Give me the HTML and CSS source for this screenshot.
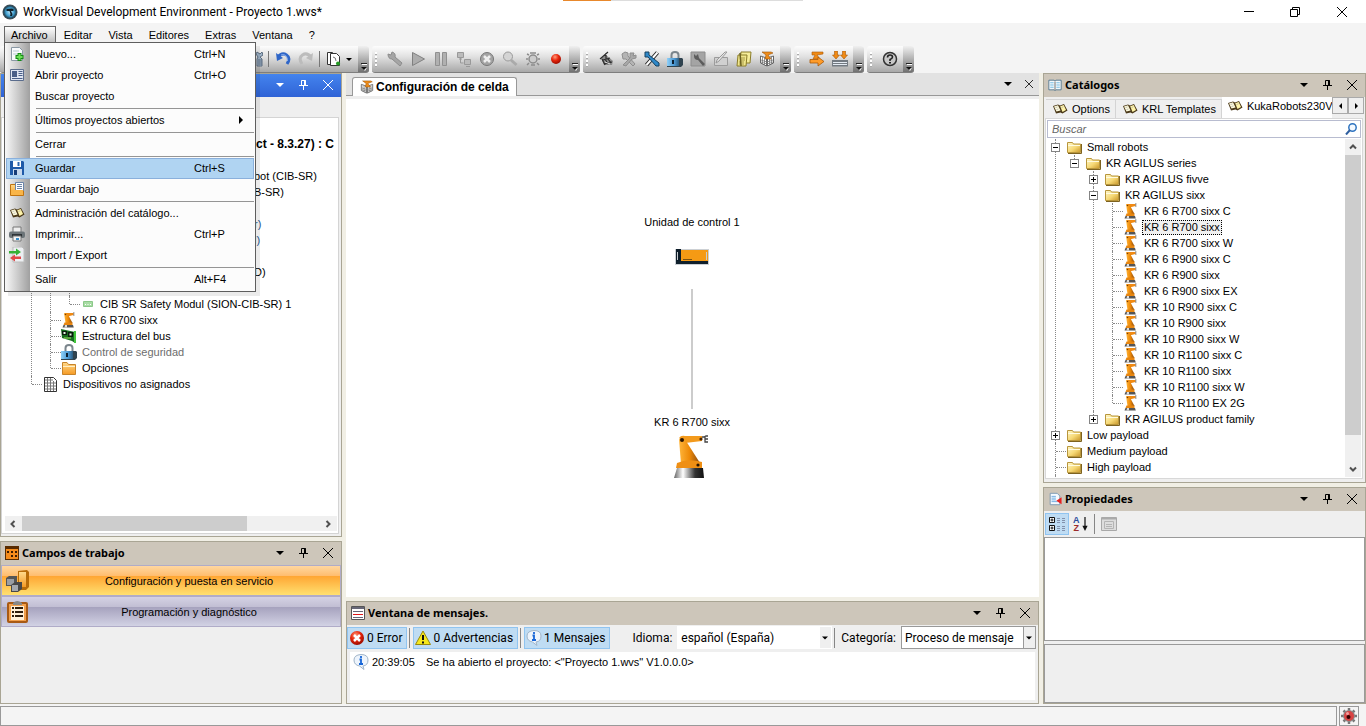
FILE: index.html
```html
<!DOCTYPE html>
<html lang="es">
<head>
<meta charset="utf-8">
<title>WorkVisual Development Environment - Proyecto 1.wvs*</title>
<link rel="stylesheet" href="styles.css">
</head>
<body>
<svg class="defs" aria-hidden="true">
  <defs>
    <linearGradient id="gGold" x1="0" y1="0" x2="1" y2="1"><stop offset="0" stop-color="#fff8cc"/><stop offset=".55" stop-color="#f6d874"/><stop offset="1" stop-color="#c8962a"/></linearGradient>
    <linearGradient id="gOrange" x1="0" y1="0" x2="0" y2="1"><stop offset="0" stop-color="#ffd98a"/><stop offset="1" stop-color="#f59a24"/></linearGradient>
    <linearGradient id="gArm" x1="0" y1="0" x2="1" y2="0"><stop offset="0" stop-color="#ffb53a"/><stop offset=".5" stop-color="#ee8a08"/><stop offset="1" stop-color="#8a4a10"/></linearGradient>
    <linearGradient id="gBase" x1="0" y1="0" x2="1" y2="0"><stop offset="0" stop-color="#666"/><stop offset=".3" stop-color="#fff"/><stop offset=".7" stop-color="#333"/><stop offset="1" stop-color="#111"/></linearGradient>
    <linearGradient id="gLock" x1="0" y1="0" x2="1" y2="0"><stop offset="0" stop-color="#8fd0f8"/><stop offset=".6" stop-color="#4a98d4"/><stop offset="1" stop-color="#2c5c80"/></linearGradient>
    <radialGradient id="gRed" cx=".4" cy=".3" r=".7"><stop offset="0" stop-color="#ff9a7a"/><stop offset=".5" stop-color="#e8260c"/><stop offset="1" stop-color="#9c0c00"/></radialGradient>
    <radialGradient id="gApp" cx=".5" cy=".5" r=".5"><stop offset="0" stop-color="#bfe6fa"/><stop offset=".65" stop-color="#3f9fd0"/><stop offset="1" stop-color="#1c3f52"/></radialGradient>
  </defs>
  <symbol id="app" viewBox="0 0 16 16"><circle cx="8" cy="8" r="7.500" fill="#3c4d57"/><circle cx="8" cy="8" r="6.300" fill="url(#gApp)"/><path d="M4.500 5l5-.5 2 .5v2H9l1.500 3-.5 2H8l.5-2-1-3-3 0z" fill="#10222c"/></symbol>
  <symbol id="folder" viewBox="0 0 16 16"><path d="M1.500 3.500h5l1 1.500h7v8.500h-13z" fill="url(#gGold)" stroke="#b8963c"/><path d="M2 6.500h12" stroke="#fffbe0"/><path d="M15.500 5v9.500H2" stroke="#7d6220" fill="none"/></symbol>
  <symbol id="ofolder" viewBox="0 0 16 16"><path d="M1.500 14.500V2.500H6l1.500 2h7v10z" fill="url(#gOrange)" stroke="#c8842a"/><path d="M2 6.500h12" stroke="#fff0c8"/></symbol>
  <symbol id="robot" viewBox="0 0 16 16"><path d="M3 1h9.500v2L6.500 4.500z" fill="#f08a14"/><path d="M3 1l4 1.500 4.500 8.500H4.500z" fill="url(#gArm)"/><path d="M12 1h1.500M12 3h1.500" stroke="#444" stroke-width=".8"/><path d="M3.500 10.500h8V13h-9z" fill="#e88610"/><path d="M2.500 13H12l.8 2.500H1.500z" fill="#555"/><path d="M4 13h2v2.500H3.500z" fill="#ddd"/><circle cx="4.500" cy="2.500" r=".8" fill="#7a3c00"/></symbol>
  <symbol id="bigrobot" viewBox="0 0 36 46"><path d="M5 4Q7 1 11 2l17 0v5L11 9z" fill="#f39a1c"/><path d="M5 5l7 2 14 22-19 1z" fill="url(#gArm)"/><path d="M3 29q11-5 25-1v6H2z" fill="#ef8f14"/><path d="M3 34h26l1 10H0z" fill="url(#gBase)"/><path d="M28 3h2l2-1h2M31 3v5h3M31 5h3" stroke="#444" stroke-width="1.300" fill="none"/><circle cx="8" cy="6" r="2" fill="#2a1400"/><circle cx="27" cy="5" r="1.600" fill="#4a2400"/><circle cx="24" cy="31" r="1.600" fill="#2a1400"/></symbol>
  <symbol id="book" viewBox="0 0 16 16"><path d="M1 5l5-1.500 2 1 4-1.500 3.500 6.500-5 3-2-1-4.500 1z" fill="#4a3818"/><path d="M2 5.500l4-1.200 2.500 5.200-4 1z" fill="#fffbdc"/><path d="M8.200 5.200l3.500-1.200 2.300 5-3.500 2z" fill="#fff4a8"/><path d="M3.500 6.500l2-.5M4.500 8.500l2-.5M9.500 6.500l2-.7" stroke="#aaa" stroke-width=".7"/></symbol>
  <symbol id="bluebook" viewBox="0 0 16 16"><path d="M1 2.500h6l1 1 1-1h6v11H9l-1 1-1-1H1z" fill="#fff" stroke="#48708c"/><path d="M2.500 5h4M2.500 7h4M2.500 9h4M2.500 11h4M9.500 5h4M9.500 7h4M9.500 9h4M9.500 11h4" stroke="#78bde2"/><path d="M8 4v10" stroke="#555"/></symbol>
  <symbol id="newdoc" viewBox="0 0 16 16"><path d="M2.500 1.500h8l3 3v10h-11z" fill="#f8fafc" stroke="#8a98a4"/><path d="M4 5h6M4 8h4" stroke="#b8c8d4"/><path d="M10.500 7v8M6.500 11h8" stroke="#158a15" stroke-width="4"/><path d="M10.500 8v6M7.500 11h6" stroke="#6ee05a" stroke-width="2"/></symbol>
  <symbol id="open" viewBox="0 0 16 16"><path d="M1.500 2.500h13v11h-13z" fill="#dfe6f2" stroke="#5a6c8c"/><path d="M3 4h5v6H3z" fill="#4a5f88"/><path d="M9.500 4.500h4M9.500 6.500h4M9.500 8.500h4M3 11.500h10.500" stroke="#4a5f88"/></symbol>
  <symbol id="save" viewBox="0 0 16 16"><path d="M1 1h13l1 1v13H1z" fill="#1f5aa8"/><path d="M4 1h8v6H4z" fill="#fff"/><path d="M8.500 2h2v4h-2z" fill="#2c66b0"/><path d="M4 9h9v6H4z" fill="#c8d8ec"/><path d="M5 10h3v5H5z" fill="#173c78"/></symbol>
  <symbol id="saveas" viewBox="0 0 16 16"><path d="M1.500 3.500h5l1 2h7v9h-13z" fill="url(#gOrange)" stroke="#c07410"/><path d="M6.500 1.500h8v8h-8z" fill="#fff" stroke="#6b84a8"/><path d="M8 3.500h5M8 5.500h5M8 7.500h5" stroke="#6b84a8"/><path d="M2 9h12v5H2z" fill="#f9b548"/></symbol>
  <symbol id="print" viewBox="0 0 16 16"><path d="M4 1h8v6H4z" fill="#eee" stroke="#777"/><rect y="5.500" width="16" height="6.500" rx="2" fill="#6c7478"/><path d="M3 8h10v3H3z" fill="#2e3438"/><path d="M4 10h8v5H4z" fill="#f4f4f4" stroke="#777"/><path d="M7 12h3v2H7z" fill="#3c8ec8"/></symbol>
  <symbol id="bin" viewBox="0 0 16 16"><path d="M10 1l3 2 2-2 1 3-3 2 2 2v7h-5V8l1-2-2-3z" fill="#9fb4c8" stroke="#5c6c80"/><path d="M12 8v6M14 8v6" stroke="#5c6c80"/></symbol>
  <symbol id="impexp" viewBox="0 0 16 16"><path d="M4 0h9l2 2v13H4z" fill="#eceff2" stroke="#bbb"/><path d="M0 4h7V1.500L12 5 7 8.500V6.500H0z" fill="#35b035"/><path d="M12 9.500H6V7.500L1 11l5 3.500V12h6z" fill="#e04848"/></symbol>
  <symbol id="undo" viewBox="0 0 16 16"><path d="M3 6Q7 1 11.500 4t.5 9" fill="none" stroke="#2f66c8" stroke-width="3"/><path d="M1 2l1 8 6-3z" fill="#2f66c8"/><path d="M6 4Q12 2 12.500 10" fill="none" stroke="#8fb2ee"/></symbol>
  <symbol id="redo" viewBox="0 0 16 16"><path d="M13 6Q9 1 4.500 4T4 13" fill="none" stroke="#bcbcbc" stroke-width="3"/><path d="M15 2l-1 8-6-3z" fill="#bcbcbc"/></symbol>
  <symbol id="docs" viewBox="0 0 16 16"><path d="M1.500 1.500h5v12h-5z" fill="#fff" stroke="#333"/><path d="M4.500 2.500h6l3 3v9h-9z" fill="#fff" stroke="#333"/><path d="M7 6q3 0 3 4" fill="none" stroke="#777"/><circle cx="12" cy="12.500" r="2" fill="#249a24"/></symbol>
  <symbol id="wrench" viewBox="0 0 16 16"><path d="M1 3l3 1 1-3q4 1 3 5l7 6-2 3-8-7q-4 0-4-5z" fill="#a5a5a5" stroke="#8c8c8c"/></symbol>
  <symbol id="play" viewBox="0 0 16 16"><path d="M2.500 1.500l12 6.500-12 6.500z" fill="#adadad" stroke="#808080"/></symbol>
  <symbol id="pause" viewBox="0 0 16 16"><path d="M2.500 1.500h4v13h-4zM9.500 1.500h4v13h-4z" fill="#b0b0b0" stroke="#909090"/></symbol>
  <symbol id="net" viewBox="0 0 16 16"><path d="M1.500 1.500h6v5h-6zM8.500 8.500h6v5h-6z" fill="#bbb" stroke="#999"/><path d="M3 8h3M4.500 7v5h3M10 15.500h4" fill="none" stroke="#999"/></symbol>
  <symbol id="stop" viewBox="0 0 16 16"><circle cx="8" cy="8" r="6.500" fill="#a4a4a4" stroke="#777"/><path d="M5 5l6 6M11 5l-6 6" stroke="#eee" stroke-width="2.500"/></symbol>
  <symbol id="find" viewBox="0 0 16 16"><circle cx="6" cy="5.500" r="4.500" fill="#d4d4d4" stroke="#999"/><path d="M9 9l5.500 5" stroke="#aaa" stroke-width="3"/></symbol>
  <symbol id="bug" viewBox="0 0 16 16"><circle cx="8" cy="8" r="4" fill="#ccc" stroke="#8c8c8c" stroke-width="1.500"/><path d="M4 4L2 3M12 4l2-1M5 2h6M3 8H1M15 8h-2M4 12l-2 2M12 12l2 2M6 14h4" fill="none" stroke="#8c8c8c" stroke-width="1.500"/></symbol>
  <symbol id="rec" viewBox="0 0 16 16"><circle cx="8" cy="8" r="5" fill="url(#gRed)"/></symbol>
  <symbol id="hand" viewBox="0 0 16 16"><path d="M3 7l5-3 7 6-1 4H6z" fill="#8a8a8a"/><path d="M2 8l8-7M8 2v6M4 8l3 6M7 8l3 5M10 8l3 4M5 9l7-2M6 13l8-2" stroke="#2c2c2c" stroke-width="1.200"/><path d="M7 11l5 2" stroke="#ddd"/></symbol>
  <symbol id="tools" viewBox="0 0 16 16"><path d="M1 3l3-2 3 1 0 3 7 8-2 2-7-7-3 0z" fill="#b4b4b4" stroke="#8e8e8e"/><path d="M9 2h4l-1 3 3-1v3l-4 1-6 7-3-1 7-7z" fill="#a8a8a8" stroke="#8e8e8e"/></symbol>
  <symbol id="xtools" viewBox="0 0 16 16"><path d="M13.500 1.500L2.500 14" stroke="#222" stroke-width="4"/><path d="M13.500 1.500L2.500 14" stroke="#fff" stroke-width="2"/><path d="M1 1h4v3l10 8v3h-3L4 6H1z" fill="#2f88c8" stroke="#16405f"/></symbol>
  <symbol id="lock" viewBox="0 0 16 16"><path d="M4.500 8V4q0-3 3.500-3t3.500 3v4" fill="none" stroke="#7b858c" stroke-width="2"/><path d="M0 7h15l1 1v6l-2 2H0z" fill="#30434f"/><path d="M0 7h12v8H0z" fill="url(#gLock)"/><path d="M5 9h2v4H5z" fill="#0c1f30"/></symbol>
  <symbol id="wbox" viewBox="0 0 16 16"><path d="M1 1h14v14H1z" fill="#a4a4a4" stroke="#8c8c8c"/><path d="M4 3l2 2 2-2 1 4 6 6-2 2-5-6q-4 0-4-4z" fill="#5c5c5c"/></symbol>
  <symbol id="edit" viewBox="0 0 16 16"><path d="M1.500 6.500h13v8h-13z" fill="#d0d0d0" stroke="#9c9c9c"/><path d="M14 1L6 10l-3 2 1-3 8-8z" fill="#e4e4e4" stroke="#999"/></symbol>
  <symbol id="notes" viewBox="0 0 16 16"><path d="M5 1h10l-1 11H4z" fill="#f5ed9a" stroke="#8a7c28"/><path d="M2 4h9l-1 11H1z" fill="#efe68c" stroke="#8a7c28"/><path d="M4 7h5M4 9h5M3 11h5M3 13h5" stroke="#a89a48"/><path d="M4 2l1 13" stroke="#6b6020" stroke-width="1.500"/></symbol>
  <symbol id="cell" viewBox="0 0 16 16"><path d="M1.500 5l6 2v8l-6-3zM14.500 5l-6 2v8l6-3z" fill="#fff" stroke="#666"/><path d="M3.500 6v7M5.500 7v7M10.500 7v7M12.500 6v7M2 9l6 2 6-2M2 11l6 2 6-2" stroke="#777" stroke-width=".8" fill="none"/><path d="M3 1h9l2 1-5 2 3 4H6l1-4z" fill="#ee8c1a" stroke="#9c5408" stroke-width=".6"/></symbol>
  <symbol id="transfer" viewBox="0 0 16 16"><path d="M3 1h11v2L8 4l3 4H4l2-4H3z" fill="#f08a14" stroke="#a85808" stroke-width=".6"/><path d="M1 8.500h8V6l6 4.500L9 15v-3H1z" fill="#ff9c2a" stroke="#a85808" stroke-width=".8"/></symbol>
  <symbol id="deploy" viewBox="0 0 18 16"><path d="M3.500 0h3v4h2L5 8 1.500 4h2zM11.500 0h3v4h2L13 8 9.500 4h2z" fill="#f08a14" stroke="#a85808" stroke-width=".6"/><path d="M1 9h16v6.500H1z" fill="#737a82"/><path d="M2 11.500h14M2 13.500h14" stroke="#e4eaf2"/></symbol>
  <symbol id="help" viewBox="0 0 16 16"><circle cx="8" cy="8" r="6.500" fill="#c8c8c8" stroke="#333" stroke-width="1.500"/><path d="M5.500 6.500q0-2.500 2.500-2.500t2.500 2q0 1.500-2.500 2.500v1.500" fill="none" stroke="#222" stroke-width="1.600"/><path d="M7 11h2v1.500H7z" fill="#222"/></symbol>
  <symbol id="pin" viewBox="0 0 10 10"><path d="M2.500 .5h4v5M2.500 .5v5M5.500 1v4M6.500 .5v5M0 5.500h9M4.500 6v4" fill="none" stroke="currentColor"/></symbol>
  <symbol id="x" viewBox="0 0 10 10"><path d="M0 0l10 10M10 0L0 10" fill="none" stroke="currentColor"/></symbol>
  <symbol id="caret" viewBox="0 0 8 4"><path d="M0 0h8L4 4z" fill="currentColor"/></symbol>
  <symbol id="chev" viewBox="0 0 10 10"><path d="M2 6.500l3-3 3 3" fill="none" stroke="#505050" stroke-width="2"/></symbol>
  <symbol id="more" viewBox="0 0 6 8"><path d="M0 .5h6" stroke="#222"/><path d="M1 1.500h5" stroke="#fff"/><path d="M1 4.500h5L4 8z" fill="#fff"/><path d="M0 4h6L3 7z" fill="#111"/></symbol>
  <symbol id="orangegrid" viewBox="0 0 14 14"><path d="M0 0h14v14H0z" fill="#5a2c00"/><path d="M1 3h12v10H1z" fill="#f58c1c"/><path d="M2 5h2v2H2zM6 5h2v2H6zM10 5h2v2h-2zM6 9h2v2H6zM10 9h2v2h-2z" fill="#3c1c00"/></symbol>
  <symbol id="cubes" viewBox="0 0 24 24"><path d="M12 2l9-1 2 2v15l-3 3h-8z" fill="#b86c08"/><path d="M13 3h7v15h-7z" fill="url(#gOrange)"/><path d="M0 9l3-2h8v8l-3 2H0z" fill="#555"/><path d="M1 10h7v6H1z" fill="#9a9ea4"/><path d="M5 16l4-3h7v7l-4 3H5z" fill="#484848"/><path d="M6 16h6v6H6z" fill="#a4a8ae"/></symbol>
  <symbol id="clip" viewBox="0 0 24 24"><rect x="1" y="2" width="21" height="21" rx="2" fill="#a85a14"/><path d="M3 4h17v17H3z" fill="#f2a04c"/><path d="M5 6h13v14H5z" fill="#fff0d8"/><path d="M6 7h2v2H6zM9 7h8v2H9zM6 11h2v2H6zM9 11h8v2H9zM6 15h2v2H6zM9 15h8v2H9z" fill="#2c1c0c"/><path d="M7 3q4-4 9 0v2H7z" fill="#888"/></symbol>
  <symbol id="msgwin" viewBox="0 0 14 14"><path d="M.5 .5h13v13H.5z" fill="#fff" stroke="#555"/><path d="M1 2h12" stroke="#667" stroke-width="2"/><path d="M2 5.500h10M2 11.500h10" stroke="#667"/><path d="M2 8.500h10" stroke="#e01818"/></symbol>
  <symbol id="err" viewBox="0 0 16 16"><circle cx="8" cy="8" r="7" fill="url(#gRed)"/><path d="M5 5l6 6M11 5l-6 6" stroke="#fff" stroke-width="2.500"/></symbol>
  <symbol id="warn" viewBox="0 0 16 16"><path d="M8 1l7.500 13.500H.5z" fill="#f6e81c" stroke="#97890e"/><path d="M8 5v5M8 11.500v2" stroke="#111" stroke-width="2"/></symbol>
  <symbol id="info" viewBox="0 0 16 16"><path d="M8 .5q7 0 7 5.500t-5 6l1 3.500L6.500 12Q1 11 1 6T8 .5z" fill="#edf4fc" stroke="#a0b4c8"/><path d="M8 2v2M6.500 5.500H8V10M6 10h4" stroke="#1766d8" stroke-width="1.800" fill="none"/></symbol>
  <symbol id="prop" viewBox="0 0 16 16"><path d="M2.500 1.500h8l3 3v10h-11z" fill="#f5faff" stroke="#7392b0"/><path d="M4 5h5M4 7h5M4 9h5M4 11h7" stroke="#63a5de"/><path d="M15.500 6v8l-6-4z" fill="#e82020"/></symbol>
  <symbol id="cat" viewBox="0 0 18 16"><path d="M1.500 1.500h5v5h-5zM1.500 9.500h5v5h-5z" fill="#fff" stroke="#111"/><path d="M2.500 4h3M4 2.500v3M2.500 12h3M4 10.500v3" stroke="#111"/><path d="M9 2.500h3M9 4.500h3M9 6.500h3M9 10.500h3M9 12.500h3M9 14.500h3M14 2.500h3M14 4.500h3M14 6.500h3M14 10.500h3M14 12.500h3M14 14.500h3" stroke="#8291ac"/></symbol>
  <symbol id="down" viewBox="0 0 6 16"><path d="M3 0v12" stroke="#111" stroke-width="1.400"/><path d="M0 10h6l-3 6z" fill="#111"/></symbol>
  <symbol id="page" viewBox="0 0 16 16"><path d="M.5 1.500h15v13H.5z" fill="#ddd" stroke="#a8a8a8"/><path d="M1 2.500h14" stroke="#aaa" stroke-width="2"/><path d="M3.500 5.500h9v7h-9zM5 8.500h6M5 10.500h6" fill="none" stroke="#b4b4b4"/></symbol>
  <symbol id="lens" viewBox="0 0 12 12"><circle cx="7.500" cy="4.500" r="3.700" fill="#f4f9ff" stroke="#2f74c0" stroke-width="1.500"/><path d="M5 7L1 11.500" stroke="#2f5fa0" stroke-width="2"/></symbol>
  <symbol id="bus" viewBox="0 0 16 16"><path d="M0 1l14 3v11l-3-2-10-3z" fill="#176c20"/><path d="M1 3h5v4H1zM7 4h5v5H7z" fill="#0a1c0c"/><path d="M2.500 4h2v2h-2zM8.500 5.500h2v2h-2z" fill="#e4f4e4"/><path d="M3 10h7" stroke="#9ee05c"/><path d="M14 3v12" stroke="#43c63c" stroke-width="2"/></symbol>
  <symbol id="mod" viewBox="0 0 10 6"><path d="M.5 .5h9v5h-9z" fill="#a8dca4" stroke="#8cc88a"/><path d="M2 3.500h1M4.500 3.500h1M7 3.500h1" stroke="#fff"/></symbol>
  <symbol id="grid" viewBox="0 0 16 16"><path d="M2.500 1.500h9l3 3v11h-12z" fill="#fff" stroke="#333"/><path d="M3 4h8M3 7h11M3 10h11M3 13h11M5.500 2v13M8.500 2v13M11.500 5v10" stroke="#777"/></symbol>
  <symbol id="gear" viewBox="0 0 18 18"><path d="M9 1v16M1 9h16M3.500 3.500l11 11M14.500 3.500l-11 11" stroke="#777" stroke-width="2.500"/><circle cx="9" cy="9" r="6" fill="#8c8c8c"/><circle cx="9" cy="9" r="5" fill="#d84444"/><circle cx="8.500" cy="10" r="2" fill="#300"/><circle cx="7.500" cy="6.500" r="1.500" fill="#f0a0a0"/></symbol>
</svg>

<div class="app">
  <header class="titlebar">
    <svg class="i16"><use href="#app"/></svg>
    <h1>WorkVisual Development Environment - Proyecto 1.wvs*</h1>
    <button aria-label="Minimizar"><svg viewBox="0 0 10 10"><path d="M0 4.500h10" stroke="#000"/></svg></button>
    <button aria-label="Restaurar"><svg viewBox="0 0 10 10"><path d="M.5 2.500h7v7h-7zM2.500 2V.5h7v7H8" fill="none" stroke="#000"/></svg></button>
    <button aria-label="Cerrar"><svg><use href="#x"/></svg></button>
    <span class="edge"></span>
  </header>

  <nav class="menubar">
    <button class="active">Archivo</button><button>Editar</button><button>Vista</button><button>Editores</button><button>Extras</button><button>Ventana</button><button>?</button>
    <div class="menu" role="menu">
      <button role="menuitem"><svg class="i16"><use href="#newdoc"/></svg><span>Nuevo...</span><kbd>Ctrl+N</kbd></button>
      <button role="menuitem"><svg class="i16"><use href="#open"/></svg><span>Abrir proyecto</span><kbd>Ctrl+O</kbd></button>
      <button role="menuitem"><i class="i16"></i><span>Buscar proyecto</span></button>
      <hr>
      <button role="menuitem"><i class="i16"></i><span>Últimos proyectos abiertos</span><svg class="sub" viewBox="0 0 4 8"><path d="M0 0l4 4-4 4z"/></svg></button>
      <hr>
      <button role="menuitem"><i class="i16"></i><span>Cerrar</span></button>
      <hr>
      <button role="menuitem" class="hot"><svg class="i16"><use href="#save"/></svg><span>Guardar</span><kbd>Ctrl+S</kbd></button>
      <button role="menuitem"><svg class="i16"><use href="#saveas"/></svg><span>Guardar bajo</span></button>
      <hr>
      <button role="menuitem"><svg class="i16"><use href="#book"/></svg><span>Administración del catálogo...</span></button>
      <button role="menuitem"><svg class="i16"><use href="#print"/></svg><span>Imprimir...</span><kbd>Ctrl+P</kbd></button>
      <button role="menuitem"><svg class="i16"><use href="#impexp"/></svg><span>Import / Export</span></button>
      <hr>
      <button role="menuitem"><i class="i16"></i><span>Salir</span><kbd>Alt+F4</kbd></button>
    </div>
  </nav>

  <div class="toolbars">
    <div class="bar first">
      <button aria-label="Eliminar"><svg><use href="#bin"/></svg></button><i class="tsep"></i>
      <button aria-label="Deshacer"><svg><use href="#undo"/></svg></button>
      <button aria-label="Rehacer"><svg><use href="#redo"/></svg></button><i class="tsep"></i>
      <button class="wide" aria-label="Nuevo documento"><svg><use href="#docs"/></svg><svg class="dd"><use href="#caret"/></svg></button>
      <span class="more"><svg><use href="#more"/></svg></span>
    </div>
    <div class="bar"><i class="grip"></i>
      <button aria-label="Generar"><svg><use href="#wrench"/></svg></button><button aria-label="Iniciar"><svg><use href="#play"/></svg></button><button aria-label="Pausa"><svg><use href="#pause"/></svg></button><button aria-label="Red"><svg><use href="#net"/></svg></button><button aria-label="Detener"><svg><use href="#stop"/></svg></button><button aria-label="Buscar"><svg><use href="#find"/></svg></button><button aria-label="Depurar"><svg><use href="#bug"/></svg></button><button aria-label="Grabar"><svg><use href="#rec"/></svg></button>
      <span class="more"><svg><use href="#more"/></svg></span>
    </div>
    <div class="bar"><i class="grip"></i>
      <button aria-label="Mover"><svg><use href="#hand"/></svg></button><button aria-label="Herramientas"><svg><use href="#tools"/></svg></button><button aria-label="Ajustes"><svg><use href="#xtools"/></svg></button><button aria-label="Seguridad"><svg><use href="#lock"/></svg></button><button aria-label="Configurar"><svg><use href="#wbox"/></svg></button><button aria-label="Editar"><svg><use href="#edit"/></svg></button><button aria-label="Notas"><svg><use href="#notes"/></svg></button><button aria-label="Celda"><svg><use href="#cell"/></svg></button>
      <span class="more"><svg><use href="#more"/></svg></span>
    </div>
    <div class="bar"><i class="grip"></i>
      <button aria-label="Transferir"><svg><use href="#transfer"/></svg></button><button aria-label="Instalar"><svg class="w18"><use href="#deploy"/></svg></button>
      <span class="more"><svg><use href="#more"/></svg></span>
    </div>
    <div class="bar"><i class="grip"></i>
      <button aria-label="Ayuda"><svg><use href="#help"/></svg></button>
      <span class="more"><svg><use href="#more"/></svg></span>
    </div>
  </div>

  <main>
    <div class="col">
      <section class="panel grow">
        <div class="head blue"><h2></h2><button aria-label="Opciones"><svg class="car"><use href="#caret"/></svg></button><button aria-label="Fijar"><svg><use href="#pin"/></svg></button><button aria-label="Cerrar"><svg><use href="#x"/></svg></button></div>
        <div class="project">
          <div class="treebox">
            <ul class="tree">
              <li><div class="row"><i class="stub"></i></div>
                <ul>
                  <li><div class="row"><i class="stub"></i><b class="behind">ct - 8.3.27) : C</b></div>
                    <ul>
                      <li><div class="row"><i class="stub"></i></div>
                        <ul>
                          <li><div class="row"><i class="stub"></i><span class="behind">bot (CIB-SR)</span></div></li>
                          <li><div class="row"><i class="stub"></i><span class="behind">B-SR)</span></div></li>
                          <li><div class="row"><i class="stub"></i></div></li>
                          <li><div class="row"><i class="stub"></i><span class="behind link">r)</span></div></li>
                          <li><div class="row"><i class="stub"></i><span class="behind link">l)</span></div></li>
                          <li><div class="row"><i class="stub"></i></div></li>
                          <li><div class="row"><i class="stub"></i><span class="behind">D)</span></div></li>
                          <li><div class="row"><i class="stub"></i></div></li>
                          <li><div class="row"><i class="stub"></i><svg class="mod"><use href="#mod"/></svg><span>CIB SR Safety Modul (SION-CIB-SR) 1</span></div></li>
                        </ul>
                      </li>
                      <li><div class="row"><i class="stub"></i><svg class="i16"><use href="#robot"/></svg><span>KR 6 R700 sixx</span></div></li>
                      <li><div class="row"><i class="stub"></i><svg class="i16"><use href="#bus"/></svg><span>Estructura del bus</span></div></li>
                      <li><div class="row"><i class="stub"></i><svg class="i16"><use href="#lock"/></svg><span class="dim">Control de seguridad</span></div></li>
                      <li><div class="row"><i class="stub"></i><svg class="i16"><use href="#ofolder"/></svg><span>Opciones</span></div></li>
                    </ul>
                  </li>
                  <li><div class="row"><i class="stub"></i><svg class="i16"><use href="#grid"/></svg><span>Dispositivos no asignados</span></div></li>
                </ul>
              </li>
            </ul>
            <div class="hscroll"><svg class="lt"><use href="#chev"/></svg><div class="track"><i class="thumb"></i></div><svg class="rt"><use href="#chev"/></svg></div>
          </div>
        </div>
      </section>
      <section class="panel fields">
        <div class="head"><svg class="i14"><use href="#orangegrid"/></svg><h2>Campos de trabajo</h2><button aria-label="Opciones"><svg class="car"><use href="#caret"/></svg></button><button aria-label="Fijar"><svg><use href="#pin"/></svg></button><button aria-label="Cerrar"><svg><use href="#x"/></svg></button></div>
        <button class="field on"><svg><use href="#cubes"/></svg><span>Configuración y puesta en servicio</span></button>
        <button class="field"><svg><use href="#clip"/></svg><span>Programación y diagnóstico</span></button>
      </section>
    </div>

    <div class="col">
      <section class="doc">
        <div class="doctabs">
          <button class="doctab"><svg class="i14"><use href="#cell"/></svg>Configuración de celda</button>
          <span class="fill"></span>
          <button class="ic" aria-label="Lista"><svg class="car"><use href="#caret"/></svg></button><button class="ic" aria-label="Cerrar"><svg class="small"><use href="#x"/></svg></button>
        </div>
        <div class="canvas">
          <span>Unidad de control 1</span>
          <svg class="unit" viewBox="0 0 34 18"><path d="M0 1h34v16H0z" fill="#ccd0d4"/><path d="M1 1h5v15H1z" fill="#0c1c28"/><path d="M6 2h27v11H6z" fill="#f59a14"/><path d="M1 13h32v3H1z" fill="#10202c"/><path d="M2.500 4v8M31.500 4v8" stroke="#c8ccd0"/><path d="M8 11.500h9" stroke="#7c5210"/></svg>
          <i class="wire"></i>
          <span>KR 6 R700 sixx</span>
          <svg class="arm"><use href="#bigrobot"/></svg>
        </div>
      </section>
      <section class="panel messages">
        <div class="head"><svg class="i14"><use href="#msgwin"/></svg><h2>Ventana de mensajes.</h2><button aria-label="Opciones"><svg class="car"><use href="#caret"/></svg></button><button aria-label="Fijar"><svg><use href="#pin"/></svg></button><button aria-label="Cerrar"><svg><use href="#x"/></svg></button></div>
        <div class="msgbar">
          <button class="tog"><svg class="i16"><use href="#err"/></svg>0 Error</button><i class="vsep"></i>
          <button class="tog"><svg class="i16"><use href="#warn"/></svg>0 Advertencias</button><i class="vsep"></i>
          <button class="tog"><svg class="i16"><use href="#info"/></svg>1 Mensajes</button>
          <label class="lang" for="idioma">Idioma:</label>
          <span class="sel flat"><select id="idioma"><option>español (España)</option></select><svg><use href="#caret"/></svg></span><i class="vsep"></i>
          <label for="categoria">Categoría:</label>
          <span class="sel"><select id="categoria"><option>Proceso de mensaje</option></select><svg><use href="#caret"/></svg></span>
        </div>
        <div class="list"><svg class="i16"><use href="#info"/></svg><time>20:39:05</time><span>Se ha abierto el proyecto: &lt;"Proyecto 1.wvs" V1.0.0.0&gt;</span></div>
      </section>
    </div>

    <div class="col">
      <section class="panel grow">
        <div class="head"><svg class="i14"><use href="#bluebook"/></svg><h2>Catálogos</h2><button aria-label="Opciones"><svg class="car"><use href="#caret"/></svg></button><button aria-label="Fijar"><svg><use href="#pin"/></svg></button><button aria-label="Cerrar"><svg><use href="#x"/></svg></button></div>
        <div class="cattabs">
          <button><svg class="i16"><use href="#book"/></svg>Options</button>
          <button><svg class="i16"><use href="#book"/></svg>KRL Templates</button>
          <button class="on"><svg class="i16"><use href="#book"/></svg>KukaRobots230V</button>
          <button class="nav" aria-label="Anterior"><svg viewBox="0 0 3 6"><path d="M3 0v6L0 3z"/></svg></button><button class="nav" aria-label="Siguiente"><svg viewBox="0 0 3 6"><path d="M0 0v6l3-3z"/></svg></button>
        </div>
        <div class="catbody">
          <div class="search"><input type="text" placeholder="Buscar" aria-label="Buscar"><svg><use href="#lens"/></svg></div>
          <div class="cattree">
            <ul class="tree">
              <li><div class="row"><button class="exp minus" aria-label="Contraer"></button><svg class="i16"><use href="#folder"/></svg><span>Small robots</span></div>
                <ul>
                  <li><div class="row"><button class="exp minus" aria-label="Contraer"></button><svg class="i16"><use href="#folder"/></svg><span>KR AGILUS series</span></div>
                    <ul>
                      <li><div class="row"><button class="exp" aria-label="Expandir"></button><svg class="i16"><use href="#folder"/></svg><span>KR AGILUS fivve</span></div></li>
                      <li><div class="row"><button class="exp minus" aria-label="Contraer"></button><svg class="i16"><use href="#folder"/></svg><span>KR AGILUS sixx</span></div>
                        <ul>
                          <li><div class="row"><i class="stub"></i><svg class="i16"><use href="#robot"/></svg><span>KR 6 R700 sixx C</span></div></li>
                          <li><div class="row"><i class="stub"></i><svg class="i16"><use href="#robot"/></svg><span class="picked">KR 6 R700 sixx</span></div></li>
                          <li><div class="row"><i class="stub"></i><svg class="i16"><use href="#robot"/></svg><span>KR 6 R700 sixx W</span></div></li>
                          <li><div class="row"><i class="stub"></i><svg class="i16"><use href="#robot"/></svg><span>KR 6 R900 sixx C</span></div></li>
                          <li><div class="row"><i class="stub"></i><svg class="i16"><use href="#robot"/></svg><span>KR 6 R900 sixx</span></div></li>
                          <li><div class="row"><i class="stub"></i><svg class="i16"><use href="#robot"/></svg><span>KR 6 R900 sixx EX</span></div></li>
                          <li><div class="row"><i class="stub"></i><svg class="i16"><use href="#robot"/></svg><span>KR 10 R900 sixx C</span></div></li>
                          <li><div class="row"><i class="stub"></i><svg class="i16"><use href="#robot"/></svg><span>KR 10 R900 sixx</span></div></li>
                          <li><div class="row"><i class="stub"></i><svg class="i16"><use href="#robot"/></svg><span>KR 10 R900 sixx W</span></div></li>
                          <li><div class="row"><i class="stub"></i><svg class="i16"><use href="#robot"/></svg><span>KR 10 R1100 sixx C</span></div></li>
                          <li><div class="row"><i class="stub"></i><svg class="i16"><use href="#robot"/></svg><span>KR 10 R1100 sixx</span></div></li>
                          <li><div class="row"><i class="stub"></i><svg class="i16"><use href="#robot"/></svg><span>KR 10 R1100 sixx W</span></div></li>
                          <li><div class="row"><i class="stub"></i><svg class="i16"><use href="#robot"/></svg><span>KR 10 R1100 EX 2G</span></div></li>
                        </ul>
                      </li>
                      <li><div class="row"><button class="exp" aria-label="Expandir"></button><svg class="i16"><use href="#folder"/></svg><span>KR AGILUS product family</span></div></li>
                    </ul>
                  </li>
                </ul>
              </li>
              <li><div class="row"><button class="exp" aria-label="Expandir"></button><svg class="i16"><use href="#folder"/></svg><span>Low payload</span></div></li>
              <li><div class="row"><i class="stub"></i><svg class="i16"><use href="#folder"/></svg><span>Medium payload</span></div></li>
              <li><div class="row"><i class="stub"></i><svg class="i16"><use href="#folder"/></svg><span>High payload</span></div></li>
              <li><div class="row"><i class="stub"></i><svg class="i16"><use href="#folder"/></svg></div></li>
              <li></li>
            </ul>
            <div class="vscroll"><svg><use href="#chev"/></svg><div class="track"><i class="thumb"></i></div><svg class="dn"><use href="#chev"/></svg></div>
          </div>
        </div>
      </section>
      <section class="panel props">
        <div class="head"><svg class="i14"><use href="#prop"/></svg><h2>Propiedades</h2><button aria-label="Opciones"><svg class="car"><use href="#caret"/></svg></button><button aria-label="Fijar"><svg><use href="#pin"/></svg></button><button aria-label="Cerrar"><svg><use href="#x"/></svg></button></div>
        <div class="propbar">
          <button class="tog" aria-label="Por categorías"><svg class="w18"><use href="#cat"/></svg></button>
          <button class="az" aria-label="Alfabético"><span><b>A</b><b class="z">Z</b></span><svg><use href="#down"/></svg></button>
          <i class="vsep"></i>
          <button aria-label="Páginas"><svg class="i16"><use href="#page"/></svg></button>
        </div>
        <div class="values"></div>
        <div class="help"></div>
      </section>
    </div>
  </main>

  <footer class="status"><div class="text"></div><button aria-label="Estado"><svg><use href="#gear"/></svg></button></footer>
</div>
</body>
</html>
```
FILE: styles.css
```css
* { box-sizing: border-box; }
body { margin: 0; font: 11px/16px "Liberation Sans", Arial, sans-serif; color: #000; }
button, input, select { font: inherit; color: inherit; margin: 0; padding: 0; border: 0; background: none; border-radius: 0; }
svg { display: block; flex: none; }
h1, h2 { margin: 0; }
ul { list-style: none; margin: 0; padding: 0; }
.defs { position: absolute; width: 0; height: 0; }
.i16 { width: 16px; height: 16px; flex: none; }
.i14 { width: 14px; height: 14px; }

.app { display: flex; flex-direction: column; height: 100vh; background: #f4f4f4; overflow: hidden; }

/* title bar */
.titlebar { position: relative; display: flex; align-items: center; height: 23px; padding-left: 2px; background: #fff; flex: none; }
.titlebar h1 { flex: 1; margin-left: 5px; font: 12px/16px Roboto, "Noto Sans", sans-serif; }
.titlebar button { width: 46px; height: 20px; display: grid; place-items: center; }
.titlebar button:last-of-type { width: 48px; }
.titlebar button svg { width: 10px; height: 10px; }
.edge { position: absolute; top: 0; left: 563px; width: 240px; height: 1px; background: linear-gradient(to right, #e8882c 48px, #ddd 48px); }

/* menu */
.menubar { position: relative; display: flex; height: 23px; padding: 3px 0 0 4px; flex: none; }
.menubar > button { padding: 0 8px; height: 18px; line-height: 18px; }
.menubar > button.active { padding: 0 7px 0 6px; border: 1px solid #666; border-bottom: 0; background: linear-gradient(#fff, #b8b8b8); line-height: 17px; }
.menu { position: absolute; z-index: 5; left: 4px; top: 19px; width: 252px; padding: 1px; border: 1px solid #5e5e5e; background: linear-gradient(to right, #f8f8f8, #a0a0a0 25px, #fcfcfc 25px); box-shadow: 4px 4px 0 rgba(0, 0, 0, .08); }
.menu button { display: flex; align-items: center; width: 100%; height: 21px; padding: 0 0 1px 2px; border: 1px solid transparent; text-align: left; }
.menu span { flex: 1; margin-left: 10px; white-space: nowrap; }
.menu kbd { width: 59px; font: inherit; }
.menu .sub { width: 4px; height: 8px; margin-right: 10px; }
.menu hr { height: 1px; margin: 1px 0 1px 30px; border: 0; background: #959595; }
.menu .hot { background: #b0d4f2; border-color: #8ab0dc; }

/* toolbars */
.toolbars { display: flex; gap: 3px; height: 27px; flex: none; }
.bar { display: flex; align-items: center; height: 27px; border-radius: 3px; background: linear-gradient(#fdfdfd, #e2e2e2 40%, #a8a8a8); border-bottom: 1px solid #7e7e7e; overflow: hidden; }
.bar button { width: 23px; height: 24px; display: flex; align-items: center; justify-content: center; }
.bar button svg { width: 16px; height: 16px; }
.bar button .w18, .w18 { width: 18px; height: 16px; }
.bar .wide { width: 34px; }
.bar .wide .dd { width: 6px; height: 3px; margin-left: 4px; }
.first { padding-left: 243px; }
.tsep { width: 1px; height: 16px; margin: 0 2px; background: #777; }
.grip { width: 2px; height: 15px; margin: 0 6px 0 3px; background: repeating-linear-gradient(#fff 0 2px, #aaa 2px 3px, transparent 3px 4px); }
.more { width: 11px; height: 27px; margin-left: 2px; padding: 17px 0 0 3px; background: linear-gradient(#f0f0f0, #6c6c6c); }
.more svg { width: 6px; height: 8px; }

/* dock layout */
main { flex: 1; min-height: 0; display: grid; grid-template-columns: 342px 1fr 323px; gap: 4px; background: #f1efe5; }
.col { display: flex; flex-direction: column; gap: 4px; min-width: 0; min-height: 0; }
.panel { display: flex; flex-direction: column; border: 1px solid #a9a594; background: #efefef; min-height: 0; }
.grow { flex: 1; }
.head { display: flex; align-items: center; height: 23px; padding: 0 1px 1px 4px; background: #cdc6ba; flex: none; }
.head h2 { flex: 1; margin-left: 3px; font: bold 11px/16px "Noto Sans", "Open Sans", sans-serif; }
.head button, .ic { width: 24px; height: 22px; display: grid; place-items: center; }
.head button svg, .ic svg { width: 10px; height: 10px; }
.head .car, .ic .car { width: 8px; height: 4px; }
.ic .small { width: 8px; height: 8px; }
.head.blue { background: linear-gradient(#4484ee, #2f63d6); color: #fff; }

/* trees */
.tree { flex: 1; min-width: 0; overflow: hidden; }
.tree ul { padding-left: 19px; }
.tree li { position: relative; min-height: 16px; }
.tree li::before { content: ""; position: absolute; left: 8px; top: 0; bottom: 0; border-left: 1px dotted #888; }
.tree li:last-child::before { bottom: auto; height: 8px; }
.row { display: flex; align-items: center; height: 16px; white-space: nowrap; }
.row > span { margin-left: 3px; padding: 0 2px; line-height: 15px; }
.stub { width: 10px; margin-left: 9px; flex: none; border-top: 1px dotted #888; }
.exp { position: relative; width: 9px; height: 9px; margin: 0 6px 0 4px; border: 1px solid #848484; flex: none; background: linear-gradient(#000, #000) center / 5px 1px no-repeat, linear-gradient(#000, #000) center / 1px 5px no-repeat, #fff; }
.exp.minus { background: linear-gradient(#000, #000) center / 5px 1px no-repeat, #fff; }
.row > .picked { padding: 0 1px; border: 1px dotted #000; line-height: 13px; background: #f0f0f0; }
.dim { color: #6d6d6d; }
.link { color: #2a5a94; }
.mod { width: 10px; height: 6px; margin: 0 2px 0 3px; }

.project { flex: 1; display: flex; padding: 20px 2px 2px 0; }
.treebox { flex: 1; min-width: 0; display: flex; flex-direction: column; padding: 2px 1px 2px 2px; border: 1px solid #d4d4d4; background: #fff; }
.row > .behind { margin-left: 172px; }
.row > b.behind { margin-left: 212px; padding: 0 2px; font-size: 12px; }
.hscroll { display: flex; align-items: center; height: 15px; margin-left: 1px; background: #f0f0f0; }
.hscroll svg, .vscroll svg { width: 10px; height: 10px; margin: 3px 4px 3px 3px; }
.hscroll .track { flex: 1; height: 15px; padding-right: 22%; }
.thumb { display: block; width: 100%; height: 100%; background: #cdcdcd; }
.lt { transform: rotate(-90deg); }
.rt { transform: rotate(90deg); }
.dn { transform: rotate(180deg); }

/* work areas */
.fields { height: 163px; }
.field { display: flex; align-items: center; height: 31px; padding: 0 4px; border: 1px solid #b0acc8; background: linear-gradient(#d4d2e4, #c2bfd4 33%, #a5a1bd 34%, #d2d2e4); }
.field.on { background: linear-gradient(#ffd7a0, #ffbe70 33%, #ffa532 34%, #ffe070); }
.field svg { width: 24px; height: 24px; }
.field span { flex: 1; padding-left: 12px; text-align: center; }

/* document */
.doc { flex: 1; display: flex; flex-direction: column; background: #fff; }
.doctabs { display: flex; align-items: flex-end; height: 23px; padding-left: 6px; background: #e2e2e2; border-bottom: 1px solid #989898; }
.doctab { display: flex; align-items: center; gap: 2px; height: 19px; margin-bottom: -1px; padding: 0 7px; border: 1px solid #989898; border-bottom: 0; border-radius: 3px 3px 0 0; background: #fff; font-weight: bold; font-size: 12px; }
.fill { flex: 1; }
.doctabs .ic { width: 21px; }
.canvas { flex: 1; display: flex; flex-direction: column; align-items: center; padding: 115px 1px 0 0; border-top: 3px solid #eee; }
.unit { width: 34px; height: 18px; margin-top: 18px; }
.wire { width: 2px; height: 120px; margin: 23px 0 5px; background: #ccc; }
.arm { width: 36px; height: 46px; margin-top: 4px; }

/* messages */
.messages { height: 103px; }
.msgbar { display: flex; align-items: center; height: 25px; padding-right: 2px; font: 12px/16px Roboto, "Noto Sans", sans-serif; white-space: nowrap; }
.tog { display: flex; align-items: center; height: 22px; background: #bfdcf3; border: 1px solid #90c4f0; }
.msgbar .tog { gap: 2px; padding: 0 4px 0 1px; }
.vsep { width: 1px; height: 20px; margin: 0 3px 0 2px; background: #868686; }
.lang { margin-left: auto; }
.msgbar label { padding: 0 5px 0 3px; }
.sel { position: relative; display: flex; width: 135px; height: 23px; border: 1px solid #999; background: linear-gradient(to left, #efefef 11px, #999 11px, #999 12px, #fff 12px); }
.sel.flat { width: 155px; border-color: #fff; background: linear-gradient(to left, #efefef 11px, #fff 11px); }
.sel select { flex: 1; width: 100%; padding: 0 14px 0 3px; appearance: none; }
.sel svg { position: absolute; right: 3px; top: 9px; width: 6px; height: 4px; pointer-events: none; }
.list { flex: 1; display: flex; align-items: flex-start; margin: 2px 3px 3px; padding: 2px 3px; background: #fff; }
.list time { width: 54px; margin-left: 3px; }

/* catalogue */
.cattabs { display: flex; align-items: flex-end; height: 21px; padding: 0 1px 0 2px; flex: none; }
.cattabs button { display: flex; align-items: center; gap: 4px; height: 19px; padding: 0 5px 0 6px; border: 1px solid #d4d4d4; border-bottom: 0; border-left: 0; white-space: nowrap; flex: none; }
.cattabs .on { flex: 1; min-width: 0; height: 21px; padding: 0 0 4px 5px; background: #fff; border: 0; }
.cattabs .nav { width: 16px; height: 17px; padding: 0; justify-content: center; border: 1px solid #aaa; align-self: flex-start; }
.nav svg { width: 3px; height: 6px; }
.catbody { flex: 1; min-height: 0; display: flex; flex-direction: column; margin: 0 2px 3px 1px; padding: 1px; background: #fff; border: 1px solid #d8d8d8; }
.search { display: flex; align-items: center; height: 18px; padding: 0 3px 0 4px; border: 1px solid #b8bcd0; flex: none; }
.search input { flex: 1; height: 16px; font-style: italic; outline: 0; }
.search input::placeholder { color: #666; opacity: 1; }
.search svg { width: 12px; height: 12px; }
.cattree { flex: 1; min-height: 0; display: flex; padding-top: 1px; }
.vscroll { display: flex; flex-direction: column; width: 16px; background: #f0f0f0; }
.vscroll svg { margin: 3px; }
.vscroll .track { flex: 1; padding-bottom: 26px; }

/* properties */
.props { height: 217px; }
.propbar { display: flex; align-items: center; height: 26px; padding-left: 1px; }
.propbar .tog { padding: 0 2px; }
.az { display: flex; align-items: center; }
.propbar .az { width: 22px; padding-left: 4px; }
.az b { display: block; font: bold 9px/8px "Liberation Sans", sans-serif; color: #2a4c9c; }
.az .z { color: #9c2c2c; }
.az svg { width: 6px; height: 14px; margin-left: 2px; }
.propbar .vsep { margin: 0 6px 0 3px; }
.values { flex: 1; background: #fff; border: 1px solid #9a9a9a; }
.help { height: 59px; margin-top: 3px; border: 1px solid #9a9a9a; }

/* status bar */
.status { display: flex; gap: 2px; height: 22px; padding: 2px 7px 0 0; flex: none; }
.status .text { flex: 1; height: 20px; border: 1px solid #999; }
.status button { width: 20px; height: 20px; border: 1px solid #999; }
.status svg { width: 18px; height: 18px; }
```
